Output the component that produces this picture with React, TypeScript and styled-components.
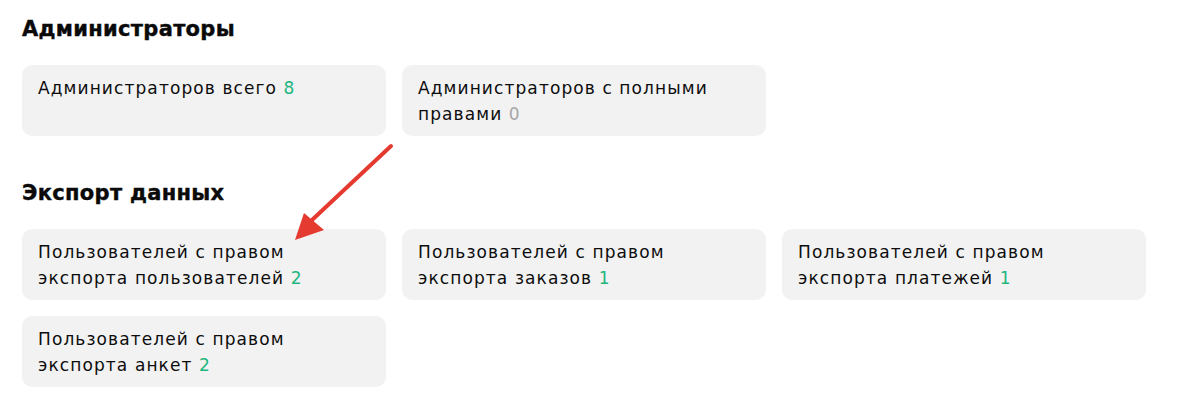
import React from "react";
import styled, { createGlobalStyle } from "styled-components";

const Global = createGlobalStyle`
  html, body { margin: 0; padding: 0; background: #fff; }
  body { font-family: "DejaVu Sans", "Noto Sans", sans-serif; color: #111; }
`;

const Page = styled.div`
  position: relative;
  padding: 14px 22px 0 22px;
  display: flex;
  flex-direction: column;
`;

const Section = styled.section`
  display: flex;
  flex-direction: column;
  gap: 21px;
  & + & { margin-top: 42px; }
`;

const Title = styled.h2`
  margin: 0;
  font-size: 21px;
  line-height: 30px;
  font-weight: 700;
  letter-spacing: 0.3px;
  color: #0a0a0a;
  -webkit-text-stroke: 0.4px #0a0a0a;
`;

const Grid = styled.div`
  display: grid;
  grid-template-columns: repeat(3, 364px);
  gap: 16px;
`;

const Card = styled.div`
  background: #f2f2f2;
  border-radius: 10px;
  min-height: 71px;
  box-sizing: border-box;
  padding: 10px 16px 9px;
  font-size: 17px;
  line-height: 26px;
  font-weight: 400;
  letter-spacing: 1.1px;
  color: #0d0d0d;
`;

const Count = styled.span<{ $muted?: boolean }>`
  color: ${(p) => (p.$muted ? "#a6a6a6" : "#1fb67e")};
`;

const Arrow = styled.svg`
  position: absolute;
  left: 290px;
  top: 140px;
  pointer-events: none;
`;

type Item = { text: string; count: number; muted?: boolean };

const admins: Item[] = [
  { text: "Администраторов всего", count: 8 },
  { text: "Администраторов с полными правами", count: 0, muted: true },
];

const exportsList: Item[] = [
  { text: "Пользователей с правом экспорта пользователей", count: 2 },
  { text: "Пользователей с правом экспорта заказов", count: 1 },
  { text: "Пользователей с правом экспорта платежей", count: 1 },
  { text: "Пользователей с правом экспорта анкет", count: 2 },
];

const StatCard = ({ item }: { item: Item }) => (
  <Card>
    {item.text} <Count $muted={item.muted}>{item.count}</Count>
  </Card>
);

export default function App() {
  return (
    <>
      <Global />
      <Page>
        <Section>
          <Title>Администраторы</Title>
          <Grid>
            {admins.map((a) => (
              <StatCard key={a.text} item={a} />
            ))}
          </Grid>
        </Section>
        <Section>
          <Title>Экспорт данных</Title>
          <Grid>
            {exportsList.map((a) => (
              <StatCard key={a.text} item={a} />
            ))}
          </Grid>
        </Section>
        <Arrow width="110" height="105" viewBox="0 0 110 105">
          <line x1="101" y1="6" x2="22" y2="80" stroke="#e53a30" strokeWidth="4" strokeLinecap="round" />
          <polygon points="5,100 14,73 34,90" fill="#e53a30" />
        </Arrow>
      </Page>
    </>
  );
}
